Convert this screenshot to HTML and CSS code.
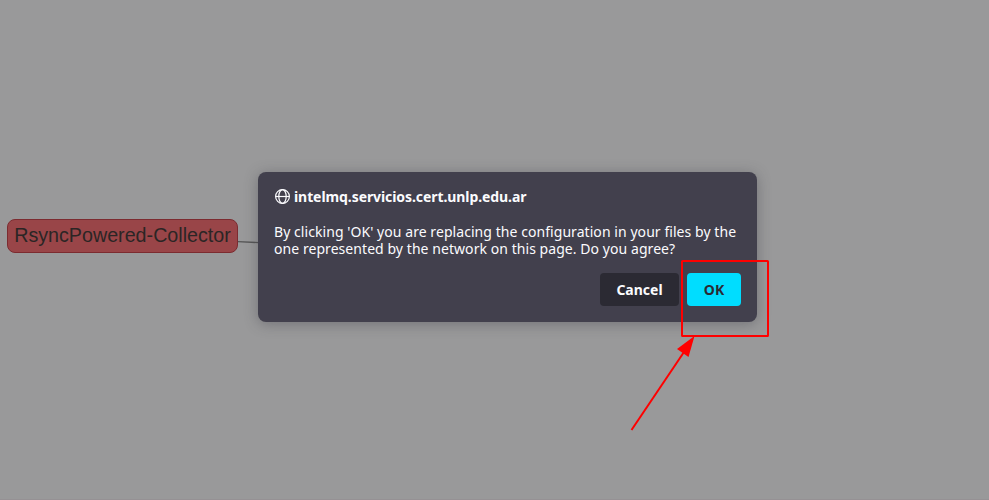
FILE: index.html
```
<!DOCTYPE html>
<html lang="en">
<head>
<meta charset="utf-8">
<title>IntelMQ Manager</title>
<link rel="stylesheet" href="styles.css">
</head>
<body>
<svg class="network" width="989" height="500" viewBox="0 0 989 500">
  <path class="edge" d="M238 241.700 L270 243.100"/>
</svg>
<div class="node">RsyncPowered-Collector</div>
<main class="dialog">
  <header class="origin">
    <svg class="globe" width="16" height="16" viewBox="0 0 16 16">
      <circle cx="8.500" cy="7.500" r="6.900"/>
      <ellipse cx="8.500" cy="7.500" rx="3.700" ry="6.900"/>
      <path d="M1.700 7.500h13.600"/>
    </svg>
    <span class="host">intelmq.servicios.cert.unlp.edu.ar</span>
  </header>
  <p class="message"><span class="line first">By clicking 'OK' you are replacing the configuration in your files by the</span><span class="line second">one represented by the network on this page. Do you agree?</span></p>
  <footer class="actions">
    <button class="button">Cancel</button>
    <button class="button primary">OK</button>
  </footer>
</main>
<svg class="annotation" width="989" height="500" viewBox="0 0 989 500">
  <rect x="682" y="261" width="86" height="75" rx="0.500"/>
  <path d="M631.500 430 L684 352"/>
  <path class="head" d="M694.500 336 L677 349 L688.500 357 Z"/>
</svg>
</body>
</html>
```
FILE: styles.css
```
body {
  margin: 0;
  height: 500px;
  box-sizing: border-box;
  padding-top: 172px;
  overflow: hidden;
  background: #99999a;
  border-bottom: 1px solid #959194;
  font-family: "Noto Sans", sans-serif;
}
.network, .annotation {
  position: absolute;
  top: 0;
  left: 0;
  pointer-events: none;
}
.edge { stroke: #555; stroke-width: 1.3; }
.node {
  position: absolute;
  left: 7px;
  top: 219px;
  width: 231px;
  height: 34px;
  box-sizing: border-box;
  border: 1px solid #7c2b30;
  border-radius: 8px;
  background: #994548;
  color: #2b2525;
  font: 19.700px/30px "Liberation Sans", sans-serif;
  text-align: center;
  white-space: nowrap;
}
.dialog {
  position: relative;
  box-sizing: border-box;
  width: 499px;
  height: 150px;
  margin-left: 258px;
  padding: 16px;
  border-radius: 8px;
  background: #42404d;
  color: #fbfbfe;
  box-shadow: 0 2px 14px rgba(58, 57, 68, 0.4);
}
.origin {
  display: flex;
  align-items: center;
  height: 17px;
  gap: 4px;
}
.globe {
  flex: none;
  fill: none;
  stroke: #fbfbfe;
  stroke-width: 1.2;
}
.host {
  font-size: 14px;
  font-weight: 700;
  letter-spacing: -0.08px;
  line-height: 17px;
  white-space: nowrap;
}
.message { margin: 18px 0 0; }
.line {
  display: block;
  font-size: 14px;
  letter-spacing: 0.06px;
  line-height: 17px;
  white-space: nowrap;
}
.actions {
  display: flex;
  justify-content: flex-end;
  gap: 8px;
  margin-top: 16px;
}
.button {
  width: 79px;
  height: 33px;
  padding: 0;
  border: 0;
  border-radius: 4px;
  background: #2b2a33;
  color: #fbfbfe;
  font: 700 14px/33px "Noto Sans", sans-serif;
}
.primary {
  width: 54px;
  background: #00ddff;
  color: #2b2a33;
}
.annotation {
  fill: none;
  stroke: #f00;
  stroke-width: 2;
}
.head { fill: #f00; stroke: none; }
```
